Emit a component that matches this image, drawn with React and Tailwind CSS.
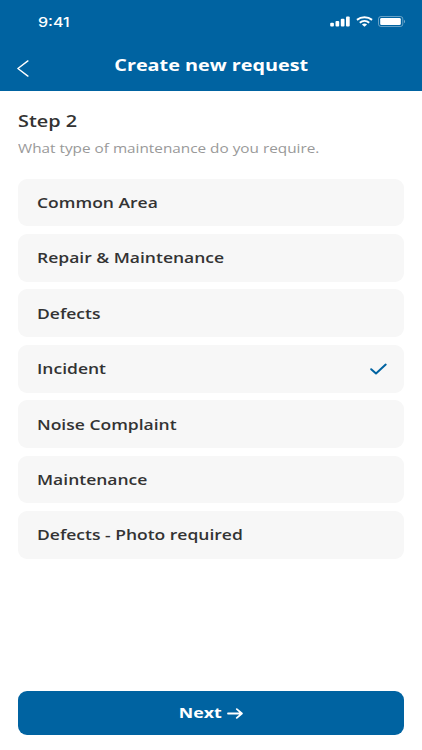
import React, { useState } from "react";

const requestTypes = [
  "Common Area",
  "Repair & Maintenance",
  "Defects",
  "Incident",
  "Noise Complaint",
  "Maintenance",
  "Defects - Photo required",
];

function SignalIcon() {
  return (
    <svg width="20" height="11" viewBox="0 0 20 11" fill="white">
      <rect x="0.2" y="6.8" width="3.7" height="3.7" rx="1" />
      <rect x="5.5" y="5" width="3.7" height="5.5" rx="1" />
      <rect x="10.8" y="2.8" width="3.7" height="7.7" rx="1" />
      <rect x="16" y="0.4" width="3.7" height="10.1" rx="1" />
    </svg>
  );
}

function WifiIcon() {
  return (
    <svg width="17" height="11" viewBox="0 0 18 11" preserveAspectRatio="none" fill="none" stroke="white" strokeWidth="2">
      <path d="M1 3.9C5.5 0.3 12.5 0.3 17 3.9" />
      <path d="M4 6.7C6.9 4.4 11.1 4.4 14 6.7" />
      <path d="M6.3 8.5C7.9 7.3 10.1 7.3 11.7 8.5L9 10.8Z" fill="white" stroke="none" />
    </svg>
  );
}

function BatteryIcon() {
  return (
    <svg width="28" height="11" viewBox="0 0 28 11" fill="none">
      <rect x="0.5" y="0.5" width="24.3" height="10" rx="2.4" stroke="white" strokeOpacity="0.4" />
      <rect x="2.2" y="2" width="20.6" height="7" rx="1.3" fill="white" />
      <path d="M26 3.7C27.4 4.4 27.4 6.6 26 7.3Z" fill="white" fillOpacity="0.45" />
    </svg>
  );
}

function App() {
  const [selected, setSelected] = useState("Incident");

  return (
    <div className="h-[750px] w-[422px] flex flex-col bg-white font-['Open_Sans',sans-serif] text-[#333333]">
      <header className="h-[91px] bg-[#0063a1] text-white">
        {/* status bar */}
        <div className="h-[42px] flex items-center justify-between pl-[38px] pr-[16px]">
          <span className="pt-[2px] origin-left scale-x-[1.19] font-['Inter',sans-serif] text-[13.5px] leading-5 font-medium">
            9:41
          </span>
          <div className="flex items-center gap-[5.5px]">
            <SignalIcon />
            <WifiIcon />
            <BatteryIcon />
          </div>
        </div>

        <div className="h-[49px] grid grid-cols-[48px_1fr_48px]">
          <button className="pl-[17px] pt-[18px] self-start">
            <svg width="12" height="17" viewBox="0 0 12 17" fill="none" stroke="white" strokeWidth="1.4" strokeLinecap="round" strokeLinejoin="round">
              <path d="M10.9 0.9L0.9 8.5L10.9 16.1" />
            </svg>
          </button>
          <h1 className="pt-[11px] w-fit justify-self-center scale-x-[1.193] text-[16.6px] leading-6 font-bold whitespace-nowrap">
            Create new request
          </h1>
        </div>
      </header>

      <main className="flex-1 px-[18px] pt-[18px]">
        <h2 className="w-fit origin-left scale-x-[1.195] text-[16.6px] leading-6 font-semibold">
          Step 2
        </h2>
        <p className="mt-[5px] w-fit origin-left scale-x-[1.178] text-[13px] leading-5 text-[#999999]">
          What type of maintenance do you require.
        </p>

        <div className="mt-[20.6px] flex flex-col gap-[7.5px]">
          {requestTypes.map((type) => (
            <button
              key={type}
              onClick={() => setSelected(type)}
              className="h-[47.9px] w-full flex items-center justify-between rounded-[9px] bg-[#f7f7f7] pl-[18.5px] pr-[17px]"
            >
              <span className="-mt-px origin-left scale-x-[1.182] text-[14.8px] leading-5 font-semibold">
                {type}
              </span>
              {selected === type && (
                <svg width="17" height="12" viewBox="0 0 17 12" fill="none" stroke="#0063a1" strokeWidth="2" strokeLinecap="round" strokeLinejoin="round">
                  <path d="M1.2 6.2L6 10.5L15.7 1.6" />
                </svg>
              )}
            </button>
          ))}
        </div>
      </main>

      <footer className="px-[18px] pb-[15px]">
        <button className="h-[44.5px] w-full flex items-center justify-center rounded-[9px] bg-[#0063a1] pl-[7px] text-white">
          <span className="flex items-center gap-[6px]">
            <span className="-mt-px origin-right scale-x-[1.2] text-[14.8px] leading-5 font-bold">
              Next
            </span>
            <svg className="mt-px" width="16" height="11" viewBox="0 0 16 11" fill="none" stroke="white" strokeWidth="1.8" strokeLinecap="round" strokeLinejoin="round">
              <path d="M1 5.5H14.8M9.8 1.1L14.9 5.5L9.8 9.9" />
            </svg>
          </span>
        </button>
      </footer>
    </div>
  );
}

export default App;
